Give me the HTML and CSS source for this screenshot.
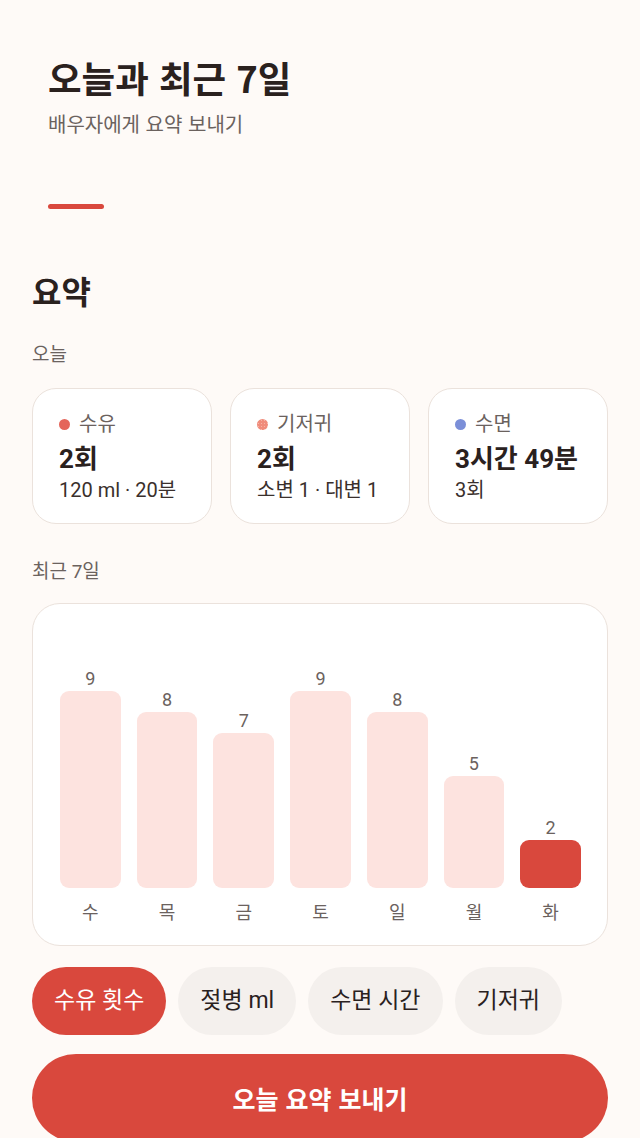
FILE: index.html
```html
<!DOCTYPE html>
<html lang="ko">
<head>
<meta charset="utf-8">
<title>오늘과 최근 7일</title>
<link rel="stylesheet" href="styles.css">
</head>
<body>
<div class="page">
  <header class="header">
    <h1 class="title">오늘과 최근 7일</h1>
    <p class="subtitle">배우자에게 요약 보내기</p>
    <div class="accent"></div>
  </header>

  <h2 class="section-title">요약</h2>

  <div class="label">오늘</div>
  <div class="cards">
    <div class="card">
      <div class="card-head"><span class="dot dot-feed"></span>수유</div>
      <div class="card-value">2회</div>
      <div class="card-sub">120 ml · 20분</div>
    </div>
    <div class="card">
      <div class="card-head"><span class="dot dot-diaper"></span>기저귀</div>
      <div class="card-value">2회</div>
      <div class="card-sub">소변 1 · 대변 1</div>
    </div>
    <div class="card">
      <div class="card-head"><span class="dot dot-sleep"></span>수면</div>
      <div class="card-value">3시간 49분</div>
      <div class="card-sub">3회</div>
    </div>
  </div>

  <div class="label label-week">최근 7일</div>
  <div class="chart">
    <div class="plot">
      <div class="col"><span class="val">9</span><div class="bar" style="height:197px"></div></div>
      <div class="col"><span class="val">8</span><div class="bar" style="height:176px"></div></div>
      <div class="col"><span class="val">7</span><div class="bar" style="height:155px"></div></div>
      <div class="col"><span class="val">9</span><div class="bar" style="height:197px"></div></div>
      <div class="col"><span class="val">8</span><div class="bar" style="height:176px"></div></div>
      <div class="col"><span class="val">5</span><div class="bar" style="height:112px"></div></div>
      <div class="col"><span class="val">2</span><div class="bar bar-active" style="height:48px"></div></div>
    </div>
    <div class="days">
      <span>수</span><span>목</span><span>금</span><span>토</span><span>일</span><span>월</span><span>화</span>
    </div>
  </div>

  <div class="chips">
    <button class="chip chip-active">수유 횟수</button>
    <button class="chip">젖병 ml</button>
    <button class="chip">수면 시간</button>
    <button class="chip">기저귀</button>
  </div>

  <button class="send">오늘 요약 보내기</button>
</div>
</body>
</html>
```

FILE: styles.css
```css
* { box-sizing: border-box; }

html, body {
  margin: 0;
  padding: 0;
  background: #fefaf7;
}

body {
  font-family: Roboto, "Noto Sans CJK KR", sans-serif;
  color: #2a211e;
  overflow: hidden;
}

.page {
  padding: 56px 32px 0;
}

.header {
  padding-left: 16px;
}

.title {
  margin: 0;
  font-family: "Noto Sans CJK KR", sans-serif;
  font-size: 36.5px;
  line-height: 44px;
  font-weight: 700;
}

.subtitle {
  margin: 11px 0 0;
  font-family: "Noto Sans CJK KR", sans-serif;
  font-size: 20px;
  line-height: 26px;
  color: #6b625e;
}

.accent {
  margin-top: 67px;
  width: 56px;
  height: 5px;
  border-radius: 3px;
  background: #d9483d;
}

.section-title {
  margin: 61px 0 0;
  font-family: "Noto Sans CJK KR", sans-serif;
  font-size: 32px;
  line-height: 40px;
  font-weight: 700;
}

.label {
  margin-top: 34px;
  font-size: 19px;
  line-height: 22px;
  color: #6b625e;
}

.label-week {
  margin-top: 37px;
}

.cards {
  margin-top: 22px;
  display: grid;
  grid-template-columns: repeat(3, 1fr);
  gap: 18px;
}

.card {
  height: 136px;
  background: #ffffff;
  border: 1.5px solid #ebe2dc;
  border-radius: 24px;
  padding: 23px 0 0 26px;
}

.card-head {
  display: flex;
  align-items: center;
  gap: 9px;
  font-size: 20px;
  line-height: 24px;
  color: #6b625e;
}

.dot {
  width: 11px;
  height: 11px;
  border-radius: 50%;
  flex: none;
}

.dot-feed { background: #e4655a; }
.dot-diaper {
  background: #f08c7b;
  background-image: radial-gradient(circle, #f6b4a6 30%, transparent 32%);
  background-size: 3px 3px;
}
.dot-sleep { background: #7b8fd8; }

.card-value {
  margin-top: 8px;
  font-size: 26px;
  line-height: 30px;
  font-weight: 700;
}

.card-sub {
  margin-top: 4px;
  font-size: 20px;
  line-height: 24px;
  color: #3a302c;
}

.chart {
  margin-top: 20px;
  background: #ffffff;
  border: 1.5px solid #ebe2dc;
  border-radius: 28px;
  padding: 39px 26px 21px 27px;
}

.plot {
  height: 245px;
  display: grid;
  grid-template-columns: repeat(7, 1fr);
  gap: 16px;
}

.col {
  display: flex;
  flex-direction: column;
  justify-content: flex-end;
  align-items: stretch;
}

.val {
  text-align: center;
  font-size: 18px;
  line-height: 22px;
  color: #6b625e;
  margin-bottom: 1px;
}

.bar {
  background: #fde3df;
  border-radius: 9px;
}

.bar-active {
  background: #d9483d;
}

.days {
  margin-top: 14px;
  display: grid;
  grid-template-columns: repeat(7, 1fr);
  gap: 16px;
}

.days span {
  text-align: center;
  font-size: 18px;
  line-height: 22px;
  color: #6b625e;
}

.chips {
  margin-top: 21px;
  display: flex;
  gap: 12px;
}

.chip {
  border: none;
  margin: 0;
  height: 68px;
  padding: 0 22px;
  border-radius: 34px;
  background: #f4f0ed;
  color: #2a211e;
  font-family: Roboto, "Noto Sans CJK KR", sans-serif;
  font-size: 23px;
  line-height: 28px;
}

.chip-active {
  background: #d9483d;
  color: #ffffff;
}

.send {
  display: block;
  width: 100%;
  margin-top: 19px;
  height: 88px;
  border: none;
  border-radius: 44px;
  background: #d9483d;
  color: #ffffff;
  font-family: "Noto Sans CJK KR", sans-serif;
  font-size: 25px;
  font-weight: 700;
}
```
